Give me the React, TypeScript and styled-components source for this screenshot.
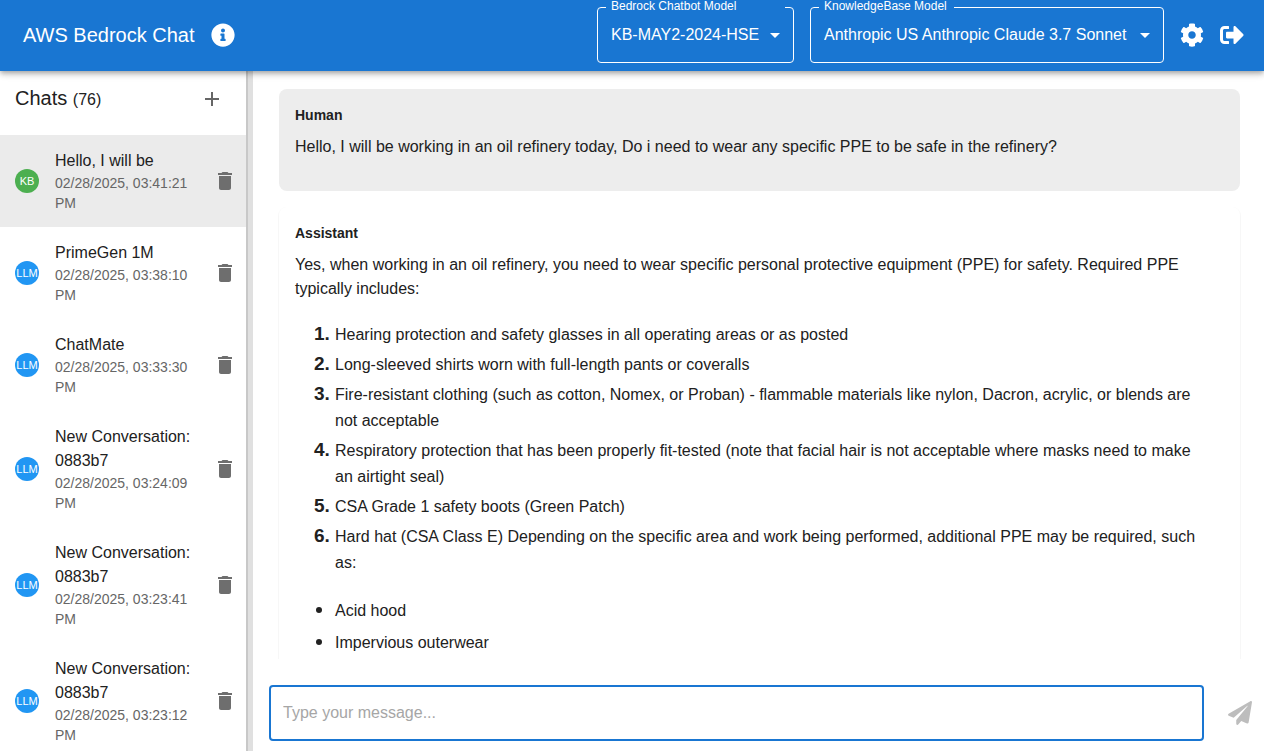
import React, { useState } from "react";
import styled, { createGlobalStyle } from "styled-components";
import { FaCog, FaInfoCircle, FaPaperPlane, FaSignOutAlt } from "react-icons/fa";
import { MdAdd, MdArrowDropDown, MdDelete } from "react-icons/md";

const GlobalStyle = createGlobalStyle`
  *, *::before, *::after { box-sizing: border-box; }
  body {
    margin: 0;
    background: #fff;
    color: #212121;
    font-family: "Liberation Sans", Helvetica, Arial, sans-serif;
    font-size: 16px;
    line-height: 24px;
  }
  button, input, select { font: inherit; }
`;

const Page = styled.div`
  display: flex;
  flex-direction: column;
  height: 100vh;
`;

const AppBar = styled.header`
  position: relative;
  z-index: 1;
  flex: none;
  display: flex;
  align-items: center;
  gap: 16px;
  padding: 0 20px 2px 23px;
  background: #1976d2;
  color: #fff;
  box-shadow: 0 2px 4px -1px rgba(0, 0, 0, 0.2), 0 4px 5px rgba(0, 0, 0, 0.14),
    0 1px 10px rgba(0, 0, 0, 0.12);
`;

const AppTitle = styled.h1`
  margin: 0;
  font-size: 20px;
  font-weight: 400;
  line-height: 32px;
`;

const IconButton = styled.button<{ $color?: string }>`
  flex: none;
  display: flex;
  align-items: center;
  justify-content: center;
  width: 24px;
  height: 24px;
  padding: 0;
  border: 0;
  background: none;
  color: ${(p) => p.$color ?? "inherit"};
  font-size: 24px;
  cursor: pointer;
`;

const Spacer = styled.div`
  flex: 1;
`;

const Field = styled.fieldset<{ $width: number }>`
  display: flex;
  width: ${(p) => p.$width}px;
  min-width: 0;
  margin: 0 0 6px;
  padding: 0 0 6px;
  border: 1px solid #fff;
  border-radius: 4px;
`;

const FieldLegend = styled.legend<{ $notch: number }>`
  width: ${(p) => p.$notch}px;
  height: 14px;
  margin-left: 8px;
  padding: 0 0 0 5px;
  font-size: 12px;
  line-height: 12px;
  white-space: nowrap;

  label {
    display: block;
  }
`;

const SelectBox = styled.div`
  position: relative;
  flex: 1;
  display: flex;
  align-items: center;

  svg {
    position: absolute;
    right: 6px;
    font-size: 24px;
    pointer-events: none;
  }
`;

const Select = styled.select`
  appearance: none;
  width: 100%;
  height: 42px;
  padding: 0 28px 0 13px;
  border: 0;
  outline: 0;
  background: transparent;
  color: #fff;

  option {
    color: #212121;
  }
`;

const Body = styled.div`
  flex: 1;
  min-height: 0;
  display: flex;
`;

const Sidebar = styled.aside`
  flex: none;
  width: 246px;
  overflow-y: auto;
  scrollbar-width: none;
`;

const SidebarHeader = styled.div`
  display: flex;
  align-items: center;
  justify-content: space-between;
  height: 64px;
  padding: 0 22px 8px 15px;
`;

const SidebarTitle = styled.h2`
  margin: 0;
  font-size: 20px;
  font-weight: 400;
  line-height: 32px;

  span {
    font-size: 16px;
  }
`;

const Divider = styled.div`
  flex: none;
  width: 7px;
  border-left: 2px solid #c8c8c8;
  background: #e0e0e0;
  cursor: col-resize;
`;

const ChatList = styled.ul`
  margin: 0;
  padding: 0;
  list-style: none;
`;

const ChatItem = styled.li<{ $selected?: boolean }>`
  display: flex;
  align-items: center;
  gap: 16px;
  padding: 14px 9px 14px 15px;
  background: ${(p) => (p.$selected ? "#ebebeb" : "transparent")};
`;

const Avatar = styled.span<{ $kind: string }>`
  flex: none;
  display: flex;
  align-items: center;
  justify-content: center;
  width: 24px;
  height: 24px;
  border-radius: 50%;
  overflow: hidden;
  background: ${(p) => (p.$kind === "KB" ? "#4caf50" : "#2196f3")};
  color: #fff;
  font-size: 11px;
`;

const ChatText = styled.div`
  flex: 1;
  min-width: 0;
`;

const ChatName = styled.div`
  line-height: 24px;
`;

const ChatDate = styled.div`
  color: #666;
  font-size: 14px;
  line-height: 20px;
`;

const Main = styled.main`
  flex: 1;
  min-width: 0;
  display: flex;
  flex-direction: column;
`;

const Messages = styled.div`
  flex: 1;
  min-height: 0;
  display: flex;
  flex-direction: column;
  gap: 16px;
  padding: 18px 24px 0 26px;
  overflow-y: auto;
  scrollbar-width: none;
`;

const Message = styled.article<{ $human?: boolean }>`
  flex: none;
  padding: 16px;
  border-radius: 8px;
  background: ${(p) => (p.$human ? "#ededed" : "#fff")};
  box-shadow: ${(p) => (p.$human ? "none" : "0 1px 1px 1px #f7f7f7")};
`;

const Author = styled.h3`
  margin: 0 0 10px;
  font-size: 14px;
  line-height: 20px;
`;

const Paragraph = styled.p`
  margin: 0 0 16px;
`;

const NumberedList = styled.ol`
  display: flex;
  flex-direction: column;
  gap: 3px;
  margin: 20px 0;
  padding: 0 14px 0 40px;
  line-height: 26px;

  li::marker {
    font-size: 19px;
    font-weight: 700;
  }
`;

const BulletList = styled.ul`
  display: flex;
  flex-direction: column;
  gap: 4px;
  margin: 20px 0;
  padding: 0 14px 0 40px;
  line-height: 26px;

  li::marker {
    font-size: 20px;
  }
`;

const Composer = styled.form`
  flex: none;
  display: flex;
  align-items: center;
  gap: 24px;
  padding: 26px 12px 10px 16px;
`;

const MessageInput = styled.input`
  flex: 1;
  min-width: 0;
  height: 56px;
  padding: 0 12px;
  border: 2px solid #1976d2;
  border-radius: 4px;
  outline: 0;
  background: #fff;
  color: #212121;

  &::placeholder {
    color: #a6a6a6;
    opacity: 1;
  }
`;

const chats = [
  { kind: "KB", name: "Hello, I will be", date: "02/28/2025, 03:41:21 PM" },
  { kind: "LLM", name: "PrimeGen 1M", date: "02/28/2025, 03:38:10 PM" },
  { kind: "LLM", name: "ChatMate", date: "02/28/2025, 03:33:30 PM" },
  { kind: "LLM", name: "New Conversation: 0883b7", date: "02/28/2025, 03:24:09 PM" },
  { kind: "LLM", name: "New Conversation: 0883b7", date: "02/28/2025, 03:23:41 PM" },
  { kind: "LLM", name: "New Conversation: 0883b7", date: "02/28/2025, 03:23:12 PM" },
];

const requirements = [
  "Hearing protection and safety glasses in all operating areas or as posted",
  "Long-sleeved shirts worn with full-length pants or coveralls",
  "Fire-resistant clothing (such as cotton, Nomex, or Proban) - flammable materials like nylon, Dacron, acrylic, or blends are not acceptable",
  "Respiratory protection that has been properly fit-tested (note that facial hair is not acceptable where masks need to make an airtight seal)",
  "CSA Grade 1 safety boots (Green Patch)",
  "Hard hat (CSA Class E) Depending on the specific area and work being performed, additional PPE may be required, such as:",
];

const extras = ["Acid hood", "Impervious outerwear"];

interface ModelSelectProps {
  id: string;
  label: string;
  value: string;
  width: number;
  notch: number;
}

function ModelSelect({ id, label, value, width, notch }: ModelSelectProps) {
  return (
    <Field $width={width}>
      <FieldLegend $notch={notch}>
        <label htmlFor={id}>{label}</label>
      </FieldLegend>
      <SelectBox>
        <Select id={id} defaultValue={value}>
          <option>{value}</option>
        </Select>
        <MdArrowDropDown />
      </SelectBox>
    </Field>
  );
}

export default function App() {
  const [draft, setDraft] = useState("");
  const [selected] = useState(0);

  return (
    <>
      <GlobalStyle />
      <Page>
        <AppBar>
          <AppTitle>AWS Bedrock Chat</AppTitle>
          <IconButton type="button" aria-label="Information">
            <FaInfoCircle />
          </IconButton>
          <Spacer />
          <ModelSelect
            id="chatbot-model"
            label="Bedrock Chatbot Model"
            value="KB-MAY2-2024-HSE"
            width={197}
            notch={179}
          />
          <ModelSelect
            id="kb-model"
            label="KnowledgeBase Model"
            value="Anthropic US Anthropic Claude 3.7 Sonnet"
            width={354}
            notch={135}
          />
          <IconButton type="button" aria-label="Settings">
            <FaCog />
          </IconButton>
          <IconButton type="button" aria-label="Sign out">
            <FaSignOutAlt />
          </IconButton>
        </AppBar>
        <Body>
          <Sidebar>
            <SidebarHeader>
              <SidebarTitle>
                Chats <span>(76)</span>
              </SidebarTitle>
              <IconButton type="button" aria-label="New chat" $color="#666">
                <MdAdd />
              </IconButton>
            </SidebarHeader>
            <ChatList>
              {chats.map((chat, i) => (
                <ChatItem key={chat.date} $selected={i === selected}>
                  <Avatar $kind={chat.kind}>{chat.kind}</Avatar>
                  <ChatText>
                    <ChatName>{chat.name}</ChatName>
                    <ChatDate>{chat.date}</ChatDate>
                  </ChatText>
                  <IconButton type="button" aria-label="Delete chat" $color="#6e6e6e">
                    <MdDelete />
                  </IconButton>
                </ChatItem>
              ))}
            </ChatList>
          </Sidebar>
          <Divider />
          <Main>
            <Messages>
              <Message $human>
                <Author>Human</Author>
                <Paragraph>
                  Hello, I will be working in an oil refinery today, Do i need to wear any specific
                  PPE to be safe in the refinery?
                </Paragraph>
              </Message>
              <Message>
                <Author>Assistant</Author>
                <Paragraph>
                  Yes, when working in an oil refinery, you need to wear specific personal
                  protective equipment (PPE) for safety. Required PPE typically includes:
                </Paragraph>
                <NumberedList>
                  {requirements.map((text) => (
                    <li key={text}>{text}</li>
                  ))}
                </NumberedList>
                <BulletList>
                  {extras.map((text) => (
                    <li key={text}>{text}</li>
                  ))}
                </BulletList>
              </Message>
            </Messages>
            <Composer onSubmit={(e) => e.preventDefault()}>
              <MessageInput
                aria-label="Message"
                placeholder="Type your message..."
                value={draft}
                onChange={(e) => setDraft(e.target.value)}
              />
              <IconButton type="submit" aria-label="Send" $color="#bdbdbd">
                <FaPaperPlane />
              </IconButton>
            </Composer>
          </Main>
        </Body>
      </Page>
    </>
  );
}
